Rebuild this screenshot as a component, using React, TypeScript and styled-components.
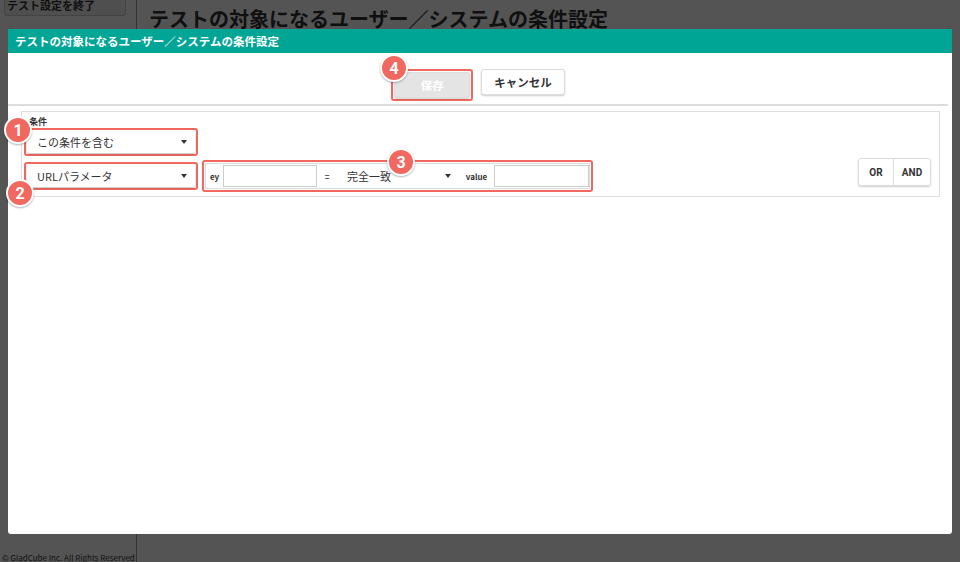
import React from "react";
import styled, { createGlobalStyle } from "styled-components";

const G = createGlobalStyle`
  html,body{margin:0;padding:0;width:960px;height:562px;overflow:hidden;}
  body{font-family:"Noto Sans CJK JP","Noto Sans",sans-serif;}
`;
const Page = styled.div`position:relative;width:960px;height:562px;background:#fff;display:flex;`;
const Side = styled.div`width:136px;border-right:1px solid #999;display:flex;flex-direction:column;justify-content:space-between;`;
const SideBtn = styled.div`width:118px;margin-left:4px;height:15px;background:#eee;border:1px solid #ccc;border-top:none;border-radius:0 0 4px 4px;font-size:11px;font-weight:bold;line-height:11px;padding-left:2px;color:#333;`;
const Foot = styled.div`font-size:8px;color:#333;padding-left:2px;line-height:8px;white-space:nowrap;`;
const Title = styled.h1`margin:4px 0 0 12px;font-size:20px;font-weight:bold;color:#333;`;
const Overlay = styled.div`position:absolute;inset:0;background:rgba(0,0,0,0.67);`;
const Modal = styled.div`position:absolute;left:8px;top:29px;width:944px;height:505px;background:#fff;border-radius:0 0 3px 3px;`;
const Head = styled.div`height:24px;background:#00a596;color:#fff;font-size:11.5px;font-weight:bold;line-height:24px;padding-left:7px;`;
const Actions = styled.div`display:flex;justify-content:center;gap:8px;padding:16px 0 3px 0;margin:0 4px 0 0;border-bottom:2px solid #ddd;`;
const Hl = styled.div`position:relative;border:2px solid #f0685f;border-radius:3px;padding:1px;display:flex;`;
const Btn = styled.button<{ $dis?: boolean }>`
  height:26px;padding:0 12px;min-width:${p=>p.$dis?76:79}px;border:1px solid #ddd;border-radius:3px;
  background:${p=>p.$dis?"#e4e4e4":"#fff"};color:${p=>p.$dis?"#fff":"#333"};font-size:11.5px;font-weight:bold;
  font-family:inherit;box-shadow:0 1px 2px rgba(0,0,0,0.2);`;
const Box = styled.div`margin:5px 12px 0 13px;border:1px solid #ddd;height:86px;padding:5px 7px 0 2px;box-sizing:border-box;`;
const Label = styled.div`font-size:9px;font-weight:bold;color:#333;line-height:9px;padding-left:5px;`;
const Row = styled.div<{ $mt: number }>`display:flex;align-items:center;margin-top:${p=>p.$mt}px;`;
const Sel = styled.div<{ $w: number; $sh?: boolean }>`
  width:${p=>p.$w}px;height:22px;box-sizing:border-box;display:flex;align-items:center;justify-content:space-between;
  padding:0 8px 0 10px;font-size:11px;color:#333;background:#fff;
  ${p=>p.$sh?"box-shadow:0 1px 2px rgba(0,0,0,0.25);border-radius:2px;":""}
`;
const Caret = styled.span`width:0;height:0;border-left:3.5px solid transparent;border-right:3.5px solid transparent;border-top:4px solid #333;`;
const Cond = styled.div`display:flex;align-items:center;height:24px;border:1px solid #ddd;`;
const Tag = styled.span<{ $w: number }>`width:${p=>p.$w}px;text-align:center;font-size:8px;font-weight:bold;color:#333;`;
const Inp = styled.div<{ $w: number }>`width:${p=>p.$w}px;height:22px;box-sizing:border-box;border:1px solid #ccc;`;
const Seg = styled.div`margin-left:auto;margin-right:1px;display:flex;border:1px solid #ddd;border-radius:3px;box-shadow:0 1px 2px rgba(0,0,0,0.2);height:26px;align-self:flex-start;margin-top:-2px;`;
const SegB = styled.div<{ $w: number }>`width:${p=>p.$w}px;display:flex;align-items:center;justify-content:center;font-size:10px;font-weight:bold;color:#333;font-family:"Roboto",sans-serif;& + &{border-left:1px solid #ddd;}`;
const Badge = styled.div<{ $x: number; $y: number }>`
  position:absolute;left:${p=>p.$x}px;top:${p=>p.$y}px;width:24px;height:24px;border-radius:50%;background:#f0685f;
  border:2px solid #fff;color:#fff;font-family:"Roboto",sans-serif;font-weight:bold;font-size:16px;display:flex;align-items:center;justify-content:center;
  box-shadow:0 1px 2px rgba(0,0,0,0.3);`;

export default function App() {
  return (<>
    <G />
    <Page>
      <Side>
        <SideBtn>テスト設定を終了</SideBtn>
        <Foot>© GladCube Inc. All Rights Reserved</Foot>
      </Side>
      <Title>テストの対象になるユーザー／システムの条件設定</Title>
      <Overlay />
      <Modal>
        <Head>テストの対象になるユーザー／システムの条件設定</Head>
        <Actions>
          <Hl><Btn $dis>保存</Btn></Hl>
          <Btn>キャンセル</Btn>
        </Actions>
        <Box>
          <Label>条件</Label>
          <Row $mt={2}><Hl><Sel $w={168} $sh>この条件を含む<Caret /></Sel></Hl></Row>
          <Row $mt={4}>
            <Hl><Sel $w={168} $sh>URLパラメータ<Caret /></Sel></Hl>
            <Hl style={{ marginLeft: 4 }}>
              <Cond>
                <Tag $w={17}>ey</Tag><Inp $w={94} />
                <Tag $w={20}>=</Tag>
                <Sel $w={122}>完全一致<Caret /></Sel>
                <Tag $w={35}>value</Tag><Inp $w={95} />
              </Cond>
            </Hl>
            <Seg><SegB $w={34}>OR</SegB><SegB $w={36}>AND</SegB></Seg>
          </Row>
        </Box>
        <Badge $x={372} $y={25}>4</Badge>
        <Badge $x={-4} $y={87}>1</Badge>
        <Badge $x={-2} $y={150}>2</Badge>
        <Badge $x={379} $y={119}>3</Badge>
      </Modal>
    </Page>
  </>);
}
